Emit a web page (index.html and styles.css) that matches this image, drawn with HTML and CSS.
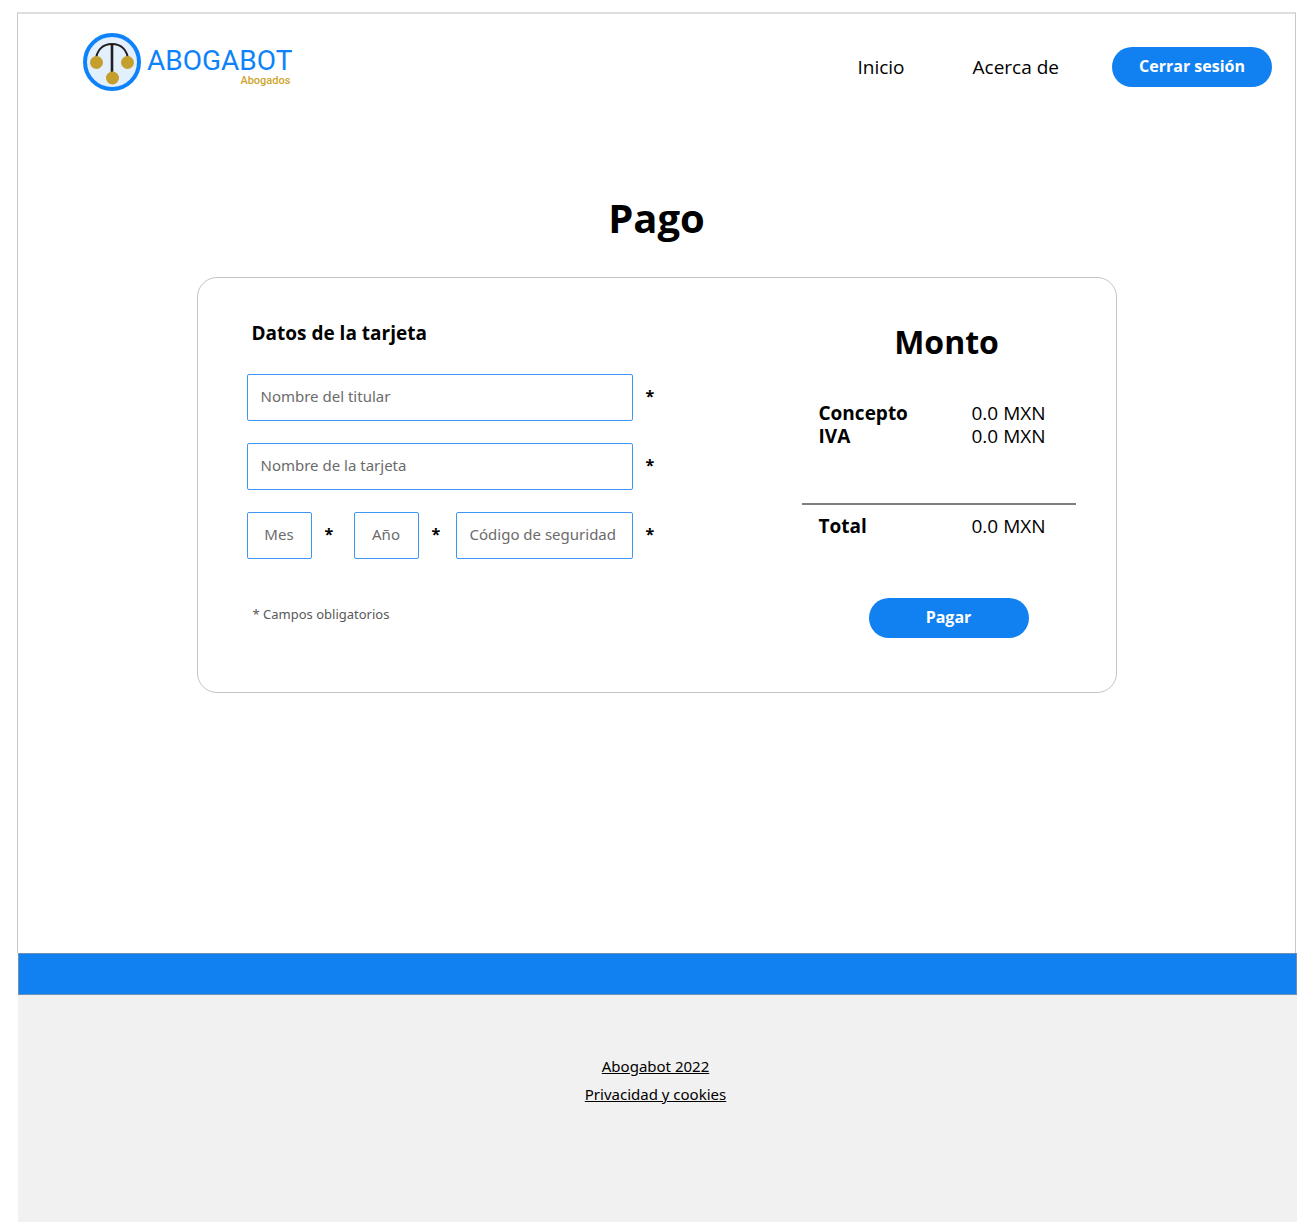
FILE: index.html
```html
<!DOCTYPE html>
<html lang="es">
<head>
<meta charset="utf-8">
<meta name="viewport" content="width=device-width, initial-scale=1">
<title>Abogabot - Pago</title>
<link rel="stylesheet" href="styles.css">
</head>
<body>
<div class="page">
  <header class="header">
    <a class="logo" href="#">
      <svg class="logo-mark" viewBox="0 0 58 58" aria-hidden="true">
        <circle cx="29" cy="29" r="27" fill="#e2effc" stroke="#0d82fb" stroke-width="4"/>
        <path d="M13 28C13 17 20 11 29 11S45 17 45 28" fill="none" stroke="#231f20" stroke-width="2"/>
        <path d="M29 11V40" stroke="#231f20" stroke-width="2.6"/>
        <g fill="#c49f2d">
          <circle cx="13.500" cy="29.500" r="6.500"/>
          <circle cx="44.500" cy="29.500" r="6.500"/>
          <circle cx="29.500" cy="45" r="6.500"/>
        </g>
      </svg>
      <span class="logo-text">
        <span class="logo-name">ABOGABOT</span>
        <span class="logo-sub">Abogados</span>
      </span>
    </a>
    <nav class="nav">
      <a href="#">Inicio</a>
      <a href="#">Acerca de</a>
      <button class="button" type="button">Cerrar sesión</button>
    </nav>
  </header>

  <main class="main">
    <h1 class="title">Pago</h1>
    <form class="card">
      <section class="data">
        <h2 class="data-title">Datos de la tarjeta</h2>
        <div class="fields">
          <input class="field wide" type="text" placeholder="Nombre del titular" aria-label="Nombre del titular">
          <span class="star">*</span>
          <input class="field wide" type="text" placeholder="Nombre de la tarjeta" aria-label="Nombre de la tarjeta">
          <span class="star">*</span>
          <input class="field short" type="text" placeholder="Mes" aria-label="Mes">
          <span class="star">*</span>
          <input class="field short" type="text" placeholder="Año" aria-label="Año">
          <span class="star">*</span>
          <input class="field" type="text" placeholder="Código de seguridad" aria-label="Código de seguridad">
          <span class="star">*</span>
        </div>
        <p class="note">* Campos obligatorios</p>
      </section>
      <section class="amount">
        <h2 class="amount-title">Monto</h2>
        <table class="amounts">
          <tbody>
            <tr><th scope="row">Concepto</th><td>0.0 MXN</td></tr>
            <tr><th scope="row">IVA</th><td>0.0 MXN</td></tr>
          </tbody>
          <tfoot>
            <tr><th scope="row">Total</th><td>0.0 MXN</td></tr>
          </tfoot>
        </table>
        <button class="button" type="submit">Pagar</button>
      </section>
    </form>
  </main>
</div>
<div class="band"></div>
<footer class="footer">
  <a href="#">Abogabot 2022</a>
  <a href="#">Privacidad y cookies</a>
</footer>
</body>
</html>
```
FILE: styles.css
```css
* {
  box-sizing: border-box;
}

body {
  display: flex;
  flex-direction: column;
  min-height: 100vh;
  margin: 0;
  padding: 12px 5px 4px 17px;
  background: #fff;
  color: #000;
  font-family: "Open Sans", "Noto Sans", sans-serif;
  font-size: 16px;
}

h1,
h2,
p {
  margin: 0;
}

.page {
  flex: 1 0 auto;
  margin-right: 1px;
  border: 1px solid #c8c8c8;
  border-top: 2px solid #dedede;
  border-bottom: 0;
}

.header {
  display: flex;
  justify-content: space-between;
  align-items: center;
  height: 96px;
  padding: 0 23px 0 65px;
}

.logo {
  display: flex;
  align-items: center;
  gap: 6px;
  color: #0d82fb;
  text-decoration: none;
}

.logo-mark {
  width: 58px;
  height: 58px;
}

.logo-text {
  display: flex;
  flex-direction: column;
  font-family: Roboto, sans-serif;
}

.logo-name {
  padding-top: 9px;
  font-size: 28px;
  line-height: 28px;
}

.logo-sub {
  align-self: flex-end;
  padding-right: 2px;
  color: #cfa42c;
  font-size: 11px;
  font-weight: 500;
  line-height: 12px;
}

.nav {
  display: flex;
  align-items: center;
  padding-top: 10px;
}

.nav a {
  margin-right: 68px;
  color: #000;
  font-size: 19px;
  line-height: 26px;
  text-decoration: none;
}

.nav a:nth-child(2) {
  margin-right: 53px;
}

.button {
  width: 160px;
  height: 40px;
  padding: 0 0 2px;
  border: 0;
  border-radius: 20px;
  background: #1181f2;
  color: #fff;
  font: bold 16px/22px "Open Sans", sans-serif;
  cursor: pointer;
}

.main {
  padding: 80px 40px 260px;
}

.title {
  font-size: 40px;
  line-height: 56px;
  text-align: center;
}

.card {
  display: flex;
  justify-content: space-between;
  max-width: 920px;
  margin: 31px auto 0;
  padding: 41px 20px 54px 49px;
  border: 1px solid #c4c4c4;
  border-radius: 20px;
}

.data {
  width: 426px;
}

.data-title {
  padding-left: 5px;
  font-size: 19px;
  line-height: 28px;
}

.fields {
  display: grid;
  grid-template-columns: 65px 42px 65px 37px 1fr 40px;
  row-gap: 22px;
  margin-top: 27px;
}

.field {
  width: 100%;
  height: 47px;
  padding: 0 13px 4px;
  border: 1px solid #3f97f3;
  border-radius: 2px;
  background: #fff;
  color: #000;
  font: 15px/22px "Noto Sans", sans-serif;
}

.field::placeholder {
  color: #6b6b6b;
  opacity: 1;
}

.wide {
  grid-column: span 5;
}

.short {
  padding: 0 0 4px;
  text-align: center;
}

.star {
  padding: 11px 0 0 13px;
  font-weight: bold;
  line-height: 22px;
}

.note {
  margin-top: 45px;
  padding-left: 6px;
  color: #595959;
  font-family: "Noto Sans", sans-serif;
  font-size: 13px;
  line-height: 20px;
}

.amount {
  display: flex;
  flex-direction: column;
  align-items: center;
  width: 294px;
}

.amount-title {
  margin-top: 1px;
  padding-right: 4px;
  font-size: 32px;
  line-height: 44px;
}

.amounts {
  align-self: flex-start;
  width: 274px;
  margin-top: 38px;
  border-collapse: collapse;
  font-size: 19px;
  line-height: 23px;
  text-align: left;
}

.amounts th {
  width: 170px;
  padding: 0 0 0 17px;
}

.amounts td {
  padding: 0;
}

.amounts tbody tr:last-child > * {
  padding-bottom: 55px;
}

.amounts tfoot {
  border-top: 2px solid #7f7f7f;
}

.amounts tfoot tr > * {
  padding-top: 10px;
}

.amount .button {
  margin-top: 60px;
}

.band {
  height: 42px;
  margin-left: 1px;
  border: 1px solid #6f8fb4;
  background: #1181f2;
}

.footer {
  display: flex;
  flex-direction: column;
  align-items: center;
  gap: 4px;
  margin-left: 1px;
  padding: 59px 4px 116px 0;
  background: #f1f1f1;
}

.footer a {
  color: #000;
  font-family: "Noto Sans", sans-serif;
  font-size: 15px;
  line-height: 24px;
}
```
